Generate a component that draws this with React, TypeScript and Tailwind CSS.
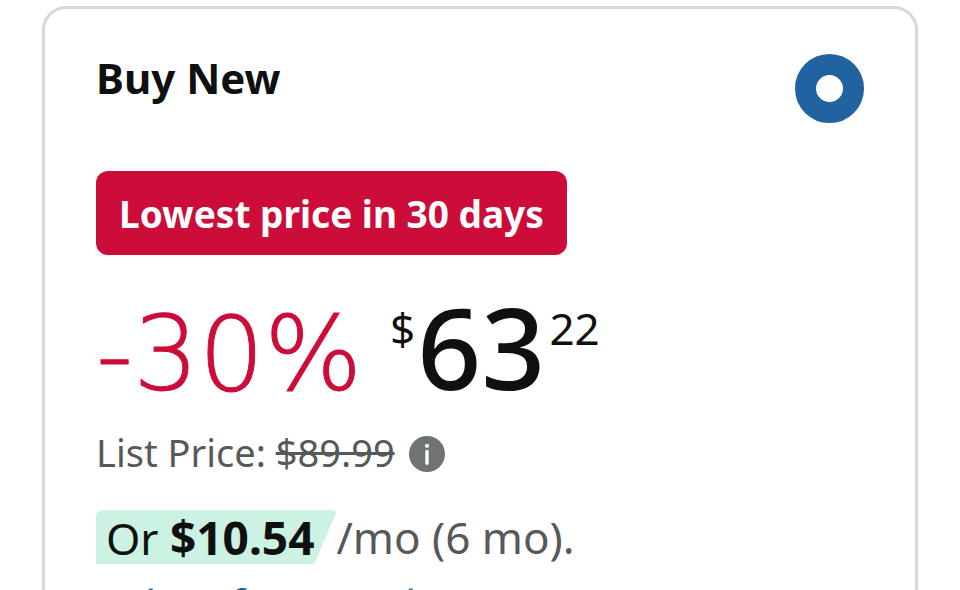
import { useState } from "react";

function InfoIcon() {
  return (
    <svg viewBox="0 0 36 36" className="h-9 w-9" aria-hidden="true">
      <circle cx="18" cy="18" r="18" fill="#6f7373" />
      <circle cx="18" cy="9.8" r="2.1" fill="#fff" />
      <path d="M18 15.5V27.2" stroke="#fff" strokeWidth="3.4" strokeLinecap="round" />
    </svg>
  );
}

function MonthlyPrice({ amount }: { amount: string }) {
  return (
    <span className="relative isolate inline-flex h-[54px] items-baseline pr-[22px] pl-2.5 text-[#0f1111]">
      {/* Slanted mint tag behind the amount */}
      <svg
        viewBox="0 0 240 54"
        preserveAspectRatio="none"
        className="absolute inset-0 -z-10 h-full w-full"
        aria-hidden="true"
      >
        <path d="M0 54V8Q0 0 8 0H234Q241 0 239 4L218 54Z" fill="#cbf2e3" />
      </svg>
      <span className="whitespace-pre">Or </span>
      <b className="text-[46px] font-bold">{amount}</b>
    </span>
  );
}

export default function App() {
  const [option, setOption] = useState("new");

  return (
    <main className="h-screen overflow-hidden bg-white px-[42px] pt-1.5 font-['Noto_Sans',sans-serif] text-[#0f1111]">
      <section className="rounded-3xl border-3 border-[#d5d9d9] px-[51px] pt-[45px] pb-12">
        <div className="flex items-start justify-between">
          <label htmlFor="buy-new" className="text-[42px] leading-[48px] font-bold">
            Buy New
          </label>
          <input
            id="buy-new"
            type="radio"
            name="offer"
            value="new"
            checked={option === "new"}
            onChange={(e) => setOption(e.target.value)}
            className="h-[69px] w-[69px] appearance-none rounded-full border-2 border-[#2162a1] bg-white checked:border-[21px]"
          />
        </div>

        <div className="mt-12 inline-flex h-[84px] items-center rounded-xl bg-[#cc0c39] px-[23px] pt-0.5 text-[37px] font-bold whitespace-nowrap text-white">
          Lowest price in 30 days
        </div>

        <div className="mt-[38px] flex items-start whitespace-nowrap">
          <span className="font-['DejaVu_Sans','Noto_Sans',sans-serif] text-[103px] leading-[122px] font-extralight text-[#cc0c39] [-webkit-text-stroke:1px]">
            -30%
          </span>
          <span className="ml-7 flex items-start">
            <span className="text-[44px] leading-[70px]">$</span>
            <span className="ml-0.5 text-[112px] leading-[108px] font-medium">63</span>
            <span className="ml-1 text-[44px] leading-[70px]">22</span>
          </span>
        </div>

        <div className="mt-2.5 flex items-center gap-3.5 text-[38px] leading-[54px] text-[#565959]">
          <span>
            List Price: <s className="decoration-3">$89.99</s>
          </span>
          <button type="button" aria-label="List price details" className="pt-1">
            <InfoIcon />
          </button>
        </div>

        <div className="mt-[31px] flex items-center text-[44px] leading-[54px] whitespace-nowrap text-[#565959]">
          <MonthlyPrice amount="$10.54" />
          <span>/mo (6 mo).</span>
        </div>

        <a href="#plans" className="mt-3.5 block text-[44px] leading-[54px] text-[#2162a1]">
          Select from 2 plans
        </a>
      </section>
    </main>
  );
}
